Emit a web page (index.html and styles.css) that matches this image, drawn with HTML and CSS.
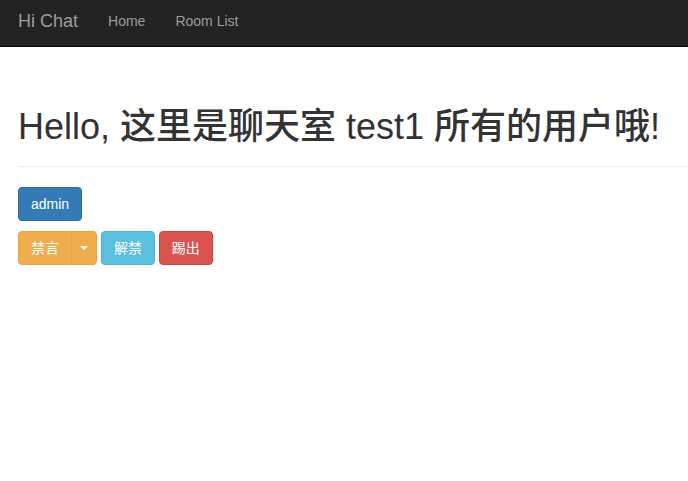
FILE: index.html
```html
<!DOCTYPE html>
<html>
	<head>
		<meta charset="UTF-8">
		<title>Hi Chat</title>
		<link rel="stylesheet" href="styles.css">
	</head>
	<body>
		<div class="navbar">
			<a class="navbar-brand" href="#">Hi Chat</a>
			<ul class="nav">
				<li><a href="#">Home</a></li>
				<li><a href="#">Room List</a></li>
			</ul>
		</div>
		<div class="container">
			<div class="page-header">
				<h1>Hello, 这里是聊天室 test1 所有的用户哦!</h1>
			</div>
			<div class="user">
				<button type="button" class="btn btn-primary">admin</button>
			</div>
			<div class="actions">
				<div class="btn-group">
					<button type="button" class="btn btn-warning">禁言</button><button type="button" class="btn btn-warning dropdown-toggle"><span class="caret"></span></button>
				</div>
				<button type="button" class="btn btn-info">解禁</button>
				<button type="button" class="btn btn-danger">踢出</button>
			</div>
		</div>
	</body>
</html>
```

FILE: styles.css
```css
* {
	box-sizing: border-box;
}
body {
	margin: 0;
	font-family: "Liberation Sans", Arial, "Noto Sans CJK SC", sans-serif;
	font-size: 14px;
	line-height: 20px;
	color: #333;
	background: #fff;
}
a {
	text-decoration: none;
}
/* 顶部导航 */
.navbar {
	display: flex;
	height: 47px;
	padding-left: 18px;
	background-color: #222;
	border-bottom: 1px solid #080808;
}
.navbar-brand {
	padding: 11px 15px 0 0;
	font-size: 18px;
	line-height: 20px;
	color: #9d9d9d;
}
.nav {
	display: flex;
	margin: 0;
	padding: 0;
	list-style: none;
}
.nav a {
	display: block;
	padding: 11px 15px 0;
	line-height: 20px;
	color: #9d9d9d;
}
/* 内容 */
.container {
	padding-left: 18px;
}
.page-header {
	margin: 60px 0 20px;
	padding-bottom: 9px;
	border-bottom: 1px solid #eee;
}
.page-header h1 {
	height: 40px;
	margin: 0 0 10px;
	font-size: 36px;
	font-weight: 500;
	line-height: 40px;
}
.user {
	margin-bottom: 10px;
}
.btn {
	display: inline-block;
	height: 34px;
	margin: 0;
	padding: 0 12px;
	font-family: inherit;
	font-size: 14px;
	line-height: 32px;
	color: #fff;
	vertical-align: top;
	border: 1px solid transparent;
	border-radius: 4px;
	cursor: pointer;
}
.btn-primary {
	background-color: #337ab7;
	border-color: #2e6da4;
}
.btn-warning {
	background-color: #f0ad4e;
	border-color: #eea236;
}
.btn-info {
	background-color: #5bc0de;
	border-color: #46b8da;
}
.btn-danger {
	background-color: #d9534f;
	border-color: #d43f3a;
}
.btn-group {
	display: inline-block;
	vertical-align: top;
}
.btn-group .btn:first-child {
	border-top-right-radius: 0;
	border-bottom-right-radius: 0;
}
.btn-group .dropdown-toggle {
	width: 26px;
	margin-left: -1px;
	padding: 0 8px;
	border-top-left-radius: 0;
	border-bottom-left-radius: 0;
}
.caret {
	display: block;
	width: 0;
	height: 0;
	border-top: 4px solid #fff;
	border-left: 4px solid transparent;
	border-right: 4px solid transparent;
}
```
